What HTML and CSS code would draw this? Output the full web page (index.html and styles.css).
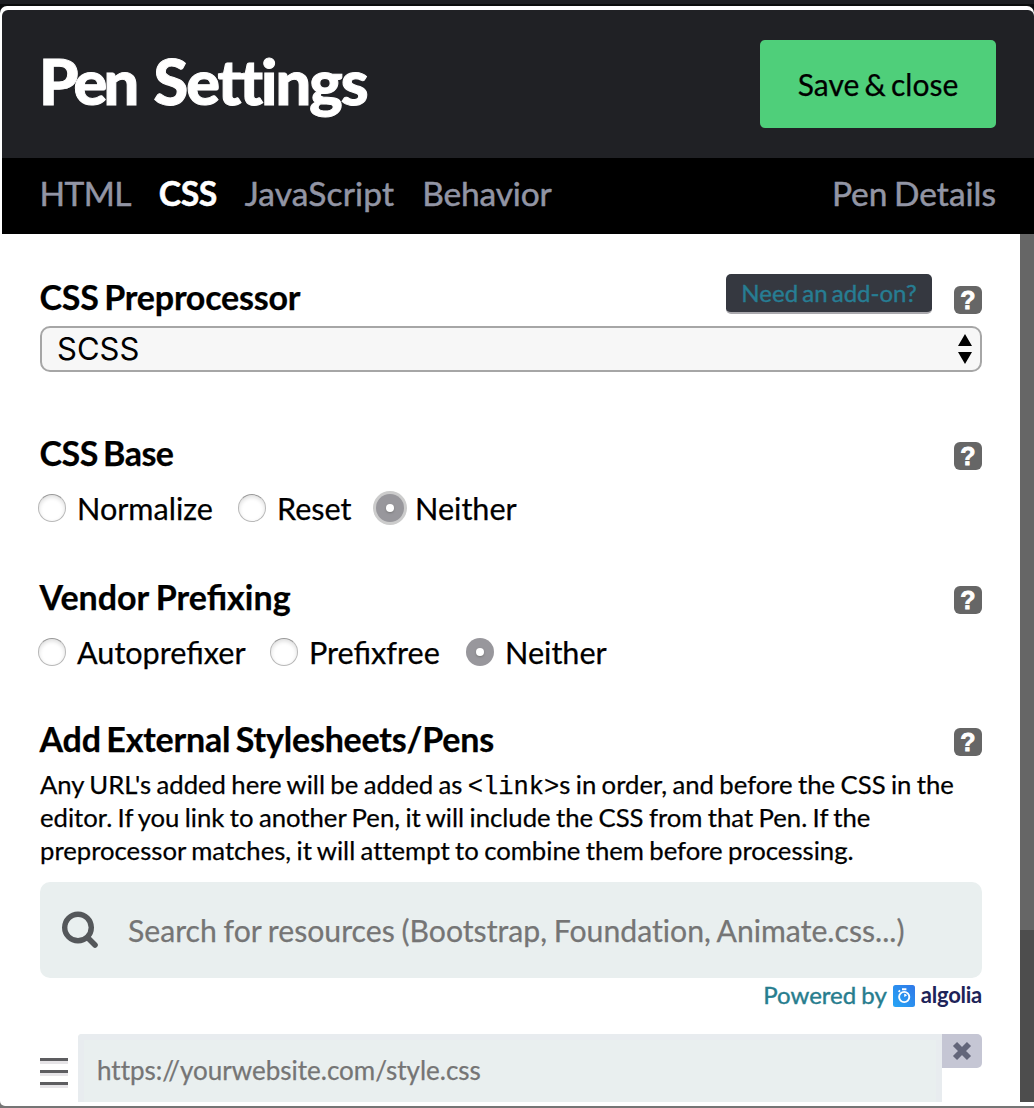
FILE: index.html
```html
<!DOCTYPE html>
<html lang="en">
<head>
<meta charset="utf-8">
<title>Pen Settings</title>
<link rel="stylesheet" href="styles.css">
</head>
<body>
<div class="modal">
  <header class="header">
    <h1 class="title"><span class="title-pen">Pen</span> Settings</h1>
    <button class="save">Save &amp; close</button>
  </header>
  <nav class="tabs">
    <a class="tab tab-html">HTML</a>
    <a class="tab tab-css active">CSS</a>
    <a class="tab tab-js">JavaScript</a>
    <a class="tab tab-behavior">Behavior</a>
    <a class="tab tab-details">Pen Details</a>
  </nav>
  <div class="body">
    <main class="content">
      <section class="group preprocessor">
        <div class="heading">
          <h2 class="label">CSS Preprocessor</h2>
          <a class="addon">Need an add-on?</a>
          <span class="help">?</span>
        </div>
        <div class="select"><span>SCSS</span>
          <svg width="14" height="30" viewBox="0 0 14 30"><path d="M7 0l7 12H0zM7 30l7-12H0z"/></svg>
        </div>
      </section>
      <section class="group base">
        <div class="heading"><h2 class="label">CSS Base</h2><span class="help">?</span></div>
        <div class="options">
          <span class="radio"></span><span class="option normalize">Normalize</span>
          <span class="radio"></span><span class="option reset">Reset</span>
          <span class="radio checked focused"></span><span class="option">Neither</span>
        </div>
      </section>
      <section class="group vendor">
        <div class="heading"><h2 class="label">Vendor Prefixing</h2><span class="help">?</span></div>
        <div class="options">
          <span class="radio"></span><span class="option autoprefixer">Autoprefixer</span>
          <span class="radio"></span><span class="option prefixfree">Prefixfree</span>
          <span class="radio checked"></span><span class="option">Neither</span>
        </div>
      </section>
      <section class="group external">
        <div class="heading"><h2 class="label">Add External Stylesheets/Pens</h2><span class="help">?</span></div>
        <p class="description">Any URL's added here will be added as <code>&lt;link&gt;</code>s in order, and before the CSS in the<br>editor. If you link to another Pen, it will include the CSS from that Pen. If the<br>preprocessor matches, it will attempt to combine them before processing.</p>
        <div class="search">
          <svg width="38" height="38" viewBox="0 0 38 38" fill="none" stroke="#54575a"><circle cx="16" cy="16.5" r="13.3" stroke-width="5.4"/><path d="M26 27l7 7" stroke-width="5.6" stroke-linecap="round"/></svg>
          <span class="placeholder">Search for resources (Bootstrap, Foundation, Animate.css...)</span>
        </div>
        <div class="powered">
          <span class="powered-text">Powered by</span>
          <svg class="logo" width="22" height="22" viewBox="0 0 22 22">
            <defs><linearGradient id="blue" x1="0" y1="1" x2="1" y2="0"><stop stop-color="#26a5f5"/><stop offset="1" stop-color="#3078e8"/></linearGradient></defs>
            <rect width="22" height="22" rx="2.5" fill="url(#blue)"/>
            <circle cx="11.2" cy="12" r="5.1" fill="none" stroke="#fff" stroke-width="1.9"/>
            <path d="M9 3.2h4.4v2H9zM5 6.2l1.4-1.4 1.2 1.2-1.4 1.4zM11.2 8.8a3.2 3.2 0 0 1 2.8 1.7L11.2 12z" fill="#fff"/>
          </svg>
          <span class="algolia">algolia</span>
        </div>
        <div class="resource">
          <span class="grip"><i></i><i></i><i></i></span>
          <span class="url">https://yourwebsite.com/style.css</span>
          <button class="remove" aria-label="Remove"><svg width="20" height="20" viewBox="0 0 20 20"><path d="M3 3l14 14M17 3l-14 14" stroke="#63667a" stroke-width="5.8"/></svg></button>
        </div>
      </section>
    </main>
    <div class="scrollbar"><div class="thumb"></div></div>
  </div>
</div>
</body>
</html>
```
FILE: styles.css
```css
* { box-sizing: border-box; }
body { margin: 0; height: 1108px; overflow: hidden; padding-top: 6px; background: linear-gradient(#1d1e22 0 4px, #0b0c0d 4px 20px, #757575 20px); font-family: Lato, sans-serif; color: #000; -webkit-text-stroke: .25px; }
h1, h2, p { margin: 0; }
button { border: 0; padding: 0; font-family: inherit; }
.modal { height: 1100px; padding: 4px 0 4px 2px; background: #fff; border-radius: 7px 7px 0 5px; overflow: hidden; }
.header { height: 148px; display: flex; justify-content: space-between; align-items: center; padding: 0 38px; background: #202125; border-radius: 6px 6px 0 0; }
.title { font-size: 63px; font-weight: 900; line-height: 76px; color: #fff; letter-spacing: -2px; margin-left: -1px; padding-bottom: 6px; white-space: nowrap; -webkit-text-stroke: 1px #fff; }
.title-pen { letter-spacing: -3.7px; margin-right: 5px; }
.save { width: 236px; height: 88px; background: #4fcf7a; border-radius: 5px; font-size: 30px; word-spacing: -2.5px; color: #000; }
.tabs { height: 76px; display: flex; align-items: center; gap: 28px; padding: 0 38px 6px; background: #000; font-size: 33.5px; line-height: 40px; color: #9295a4; white-space: nowrap; }
.tab { -webkit-text-stroke: .5px; }
.tab-html { letter-spacing: -.6px; margin-left: -.5px; }
.tab-js { letter-spacing: .15px; }
.tab-behavior { letter-spacing: -.15px; }
.tab.active { color: #fff; font-weight: 700; font-size: 33.8px; letter-spacing: -.5px; }
.tab-details { margin-left: auto; word-spacing: -2px; }
.body { height: 868px; display: flex; }
.content { width: 1018px; flex: none; padding: 36px 38px 0; overflow: hidden; }
.group { display: flex; flex-direction: column; }
.heading { height: 56px; display: flex; align-items: center; padding-top: 4px; }
.label { font-size: 34px; font-weight: 700; line-height: 40px; letter-spacing: -.2px; word-spacing: -2.5px; margin: 0 auto 0 -.5px; white-space: nowrap; padding-bottom: 6px; }
.base .label { letter-spacing: -.5px; }
.vendor .label { letter-spacing: 0; word-spacing: -1px; }
.help { width: 28px; height: 28px; border-radius: 6px; background: #666; color: #fff; font: 900 25px/28px "Liberation Sans", sans-serif; text-align: center; -webkit-text-stroke: .8px #fff; }
.addon { width: 206px; height: 40px; margin: 0 22px 12px 0; background: #353840; border-bottom: 2px solid #aaa9ae; border-radius: 5px; color: #277d93; font-size: 24px; line-height: 37px; word-spacing: -2px; text-align: center; white-space: nowrap; -webkit-text-stroke: .4px; }
.select { height: 46px; display: flex; align-items: center; justify-content: space-between; padding: 0 8px 0 15px; border: 2px solid #a6a6a6; border-radius: 10px; background: #f7f7f7; font-family: Inter, sans-serif; font-size: 31px; line-height: 42px; -webkit-text-stroke: 0; }
.base { padding-top: 54px; }
.options { height: 56px; display: flex; align-items: center; font-size: 30.6px; line-height: 36px; white-space: nowrap; padding-bottom: 4px; }
.option { padding-top: 2px; }
.radio { width: 28px; height: 28px; margin: 0 11px 0 -2px; flex: none; border-radius: 50%; background: #fff; border: 1px solid #b8b8b8; border-top-color: #999; box-shadow: inset 0 2px 4px #ddd; }
.checked { display: grid; place-items: center; margin-left: 0; background: #98979c; border: 0; box-shadow: none; }
.checked::after { content: ""; width: 8px; height: 8px; border-radius: 50%; background: #fff; box-shadow: 0 1px 2px #777; }
.focused { box-shadow: 0 0 0 3px #ccc; }
.normalize { width: 163px; }
.reset { width: 99px; }
.autoprefixer { width: 195px; }
.prefixfree { width: 157px; }
.vendor { padding-top: 32px; }
.external { padding-top: 30px; }
.description { height: 99px; font-size: 25.7px; line-height: 33px; word-spacing: -1.2px; font-variant-ligatures: none; white-space: nowrap; }
.description code { font-family: "Liberation Mono", monospace; font-size: 25.4px; line-height: 1; }
.search { height: 96px; margin-top: 15px; display: flex; align-items: center; background: #e9efef; border-radius: 10px; padding-left: 22px; color: #757575; }
.placeholder { margin-left: 28px; font-size: 30.2px; word-spacing: -1px; font-variant-ligatures: none; white-space: nowrap; }
.powered { height: 36px; display: flex; justify-content: flex-end; align-items: center; color: #277d8e; font-size: 24px; white-space: nowrap; }
.powered-text { padding-bottom: 4px; word-spacing: -1px; -webkit-text-stroke: .4px; }
.logo { margin: 0 6px 0 6px; }
.algolia { font-size: 22px; font-weight: 700; color: #1d2358; letter-spacing: -.25px; padding-bottom: 3px; -webkit-text-stroke: 0; }
.resource { height: 68px; margin-top: 20px; display: flex; align-items: flex-start; }
.grip { width: 28px; margin-right: 10px; padding-top: 24px; display: grid; gap: 6px; }
.grip i { height: 6px; border-top: 3px solid #5d5d60; background: #e6e4e7; }
.url { width: 864px; height: 68px; border: 6px solid #e8ecef; border-bottom: 0; border-radius: 4px 0 0; background: #e9efef; padding: 0 13px; font-size: 26px; line-height: 60px; font-variant-ligatures: none; color: #757575; }
.remove { width: 40px; height: 34px; display: grid; place-items: center; background: #c5c6d4; border-radius: 0 5px 5px 0; }
.scrollbar { width: 14px; flex: none; background: #4d4d4d; }
.thumb { height: 696px; background: #666; }
```
